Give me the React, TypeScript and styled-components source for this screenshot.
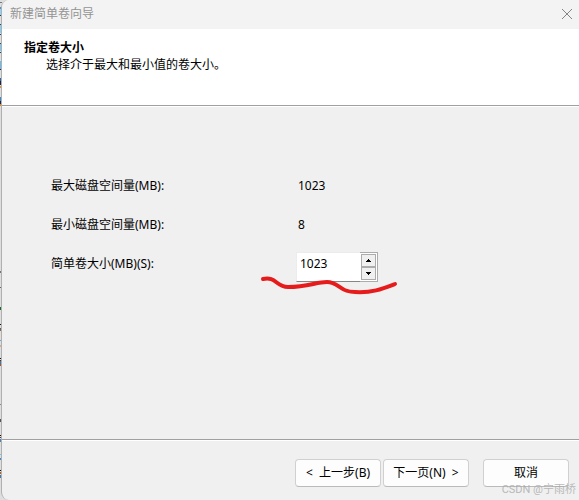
import React, { useState } from 'react';
import styled, { createGlobalStyle } from 'styled-components';

const GlobalStyle = createGlobalStyle`
  * { box-sizing: border-box; }
  body {
    margin: 0;
    background: #dedede;
    color: #000;
    font: 12px/16px "Noto Sans", "Noto Sans CJK SC", sans-serif;
  }
  button, input { font: inherit; color: inherit; }
`;

const Desktop = styled.div`
  display: flex;
  min-height: 100vh;
  overflow: hidden;
`;

const Backdrop = styled.svg`
  flex: none;
  width: 2px;
  height: 500px;
  margin-right: -1px;
`;

const Dialog = styled.main`
  position: relative;
  flex: 1;
  min-width: 0;
  display: flex;
  flex-direction: column;
  overflow: hidden;
  background: #f0f0f0;
  border-left: 1px solid #b0b0b0;
  border-radius: 8px 0 0 8px;
`;

const TitleBar = styled.header`
  display: flex;
  align-items: center;
  justify-content: space-between;
  height: 29px;
  padding: 0 6px 2px 8px;
  background: #f3f3f3;
  color: #939393;
`;

const CloseButton = styled.button`
  display: flex;
  padding: 0;
  border: 0;
  background: none;
`;

const Banner = styled.section`
  height: 78px;
  padding: 11px 22px;
  background: #fff;
  border-bottom: 1px solid #fff;
  box-shadow: inset 0 -1px #a0a0a0;
`;

const Heading = styled.h1`
  margin: 0;
  font-size: 12px;
  line-height: 16px;
  font-weight: 700;
`;

const Subtitle = styled.p`
  margin: 1px 0 0 22px;
`;

const Form = styled.form`
  flex: 1;
  display: grid;
  grid-template-columns: 247px auto;
  grid-auto-rows: 39px;
  align-content: start;
  align-items: center;
  justify-content: start;
  padding: 59px 49px;
`;

const Spinner = styled.div`
  position: relative;
  display: flex;
  width: 82px;
  height: 30px;
  margin: 6px 0 0 -2px;
`;

const SizeInput = styled.input`
  flex: 1;
  min-width: 0;
  height: 30px;
  padding: 0 3px 6px;
  border: 1px solid #ececec;
  border-right: 0;
  border-bottom-color: #868686;
  background: #fff;
  outline: 0;
`;

const Stepper = styled.div`
  display: flex;
  flex-direction: column;
  width: 18px;
  padding: 1px;
  border: 1px solid #acacac;
  border-left: 0;
  background: #fff;
`;

const StepButton = styled.button`
  flex: 1;
  display: flex;
  align-items: center;
  justify-content: center;
  padding: 0;
  border: 1px solid #acacac;
  background: #f0f0f0;
`;

const Marker = styled.svg`
  position: absolute;
  left: -40px;
  top: 20px;
  pointer-events: none;
`;

const Footer = styled.footer`
  display: flex;
  justify-content: flex-end;
  gap: 2px;
  height: 61px;
  padding: 19px 10px 0;
  border-top: 1px solid #a0a0a0;
  box-shadow: inset 0 1px #fff;
`;

const ActionButton = styled.button<{ $apart?: boolean }>`
  width: 86px;
  height: 28px;
  margin-left: ${(p) => (p.$apart ? '12px' : '0')};
  padding: 0;
  border: 1px solid #d0d0d0;
  border-bottom-color: #bababa;
  border-radius: 4px;
  background: #fdfdfd;
  white-space: pre;
`;

const Watermark = styled.div`
  position: absolute;
  right: 3px;
  bottom: 2px;
  color: #a8a8a8cc;
  font: 11px/16px Roboto, "Noto Sans CJK SC", sans-serif;
  pointer-events: none;
`;

const specks: [number, number, string][] = [
  [2, 1, '#777'], [7, 2, '#4b91d8'], [9, 6, '#8bd4f5'], [15, 1, '#25345f'],
  [24, 1, '#31446d'], [25, 8, '#7fd0f5'], [34, 1, '#253a77'],
  [43, 1, '#594231'], [44, 7, '#78caf2'], [52, 1, '#293b76'],
  [61, 8, '#65bdf0'], [69, 1, '#302849'], [78, 3, '#3565a8'], [81, 4, '#202040'], [86, 2, '#dd9044'],
  [97, 4, '#3c87d0'], [101, 3, '#202448'], [104, 2, '#e08b20'],
  [271, 2, '#777'], [287, 1, '#666'], [307, 3, '#176b25'], [324, 1, '#111'],
  [328, 1, '#3c69a0'], [329, 2, '#a06030'], [340, 1, '#5daeea'], [345, 2, '#d7b184'],
  [358, 1, '#111'], [360, 1, '#5a3117'], [361, 3, '#4478ad'], [364, 2, '#9a5c35'],
  [404, 1, '#888'], [419, 3, '#555'], [435, 1, '#111'], [437, 1, '#5c3020'],
  [439, 3, '#4982bd'], [454, 1, '#66c9f4'], [458, 2, '#438bd0'],
  [470, 1, '#111'], [472, 2, '#b45f20'], [475, 3, '#4478ad'],
];

export default function App() {
  const [size, setSize] = useState(1023);
  const step = (by: number) => setSize((n) => Math.min(1023, Math.max(8, n + by)));

  return (
    <>
      <GlobalStyle />
      <Desktop>
        <Backdrop viewBox="0 0 2 500" shapeRendering="crispEdges" aria-hidden="true">
          {specks.map(([y, h, fill]) => (
            <rect key={y} y={y} width="2" height={h} fill={fill} />
          ))}
        </Backdrop>
        <Dialog>
          <TitleBar>
            <span>新建简单卷向导</span>
            <CloseButton type="button" aria-label="关闭">
              <svg width="12" height="12" viewBox="0 0 12 12" fill="none" stroke="#858585">
                <path d="M1 1 11 11M11 1 1 11" />
              </svg>
            </CloseButton>
          </TitleBar>
          <Banner>
            <Heading>指定卷大小</Heading>
            <Subtitle>选择介于最大和最小值的卷大小。</Subtitle>
          </Banner>
          <Form id="volume" onSubmit={(e) => e.preventDefault()}>
            <label htmlFor="max">最大磁盘空间量(MB):</label>
            <output id="max">1023</output>
            <label htmlFor="min">最小磁盘空间量(MB):</label>
            <output id="min">8</output>
            <label htmlFor="size">简单卷大小(MB)(S):</label>
            <Spinner>
              <SizeInput
                id="size"
                inputMode="numeric"
                value={size}
                onChange={(e) => setSize(Number(e.target.value) || 0)}
              />
              <Stepper>
                <StepButton type="button" aria-label="增加" onClick={() => step(1)}>
                  <svg width="5" height="3" viewBox="0 0 5 3" shapeRendering="crispEdges">
                    <path d="M2 0h1v1h1v1h1v1H0V2h1V1h1Z" />
                  </svg>
                </StepButton>
                <StepButton type="button" aria-label="减少" onClick={() => step(-1)}>
                  <svg width="5" height="3" viewBox="0 0 5 3" shapeRendering="crispEdges">
                    <path d="M0 0h5v1H4v1H3v1H2V2H1V1H0Z" />
                  </svg>
                </StepButton>
              </Stepper>
              <Marker width="144" height="28" viewBox="0 0 144 28" fill="none" aria-hidden="true">
                <path
                  d="M7 7C20 4 20 15 32 15C52 15 60 10 71 10C83 10 83 20 99 20C116 21 126 17 139 12"
                  stroke="#e61c1c"
                  strokeWidth="4"
                  strokeLinecap="round"
                />
              </Marker>
            </Spinner>
          </Form>
          <Footer>
            <ActionButton type="button">{'<  上一步(B)'}</ActionButton>
            <ActionButton type="submit" form="volume">{'下一页(N)  >'}</ActionButton>
            <ActionButton type="button" $apart>取消</ActionButton>
          </Footer>
          <Watermark>CSDN @宁雨桥</Watermark>
        </Dialog>
      </Desktop>
    </>
  );
}
